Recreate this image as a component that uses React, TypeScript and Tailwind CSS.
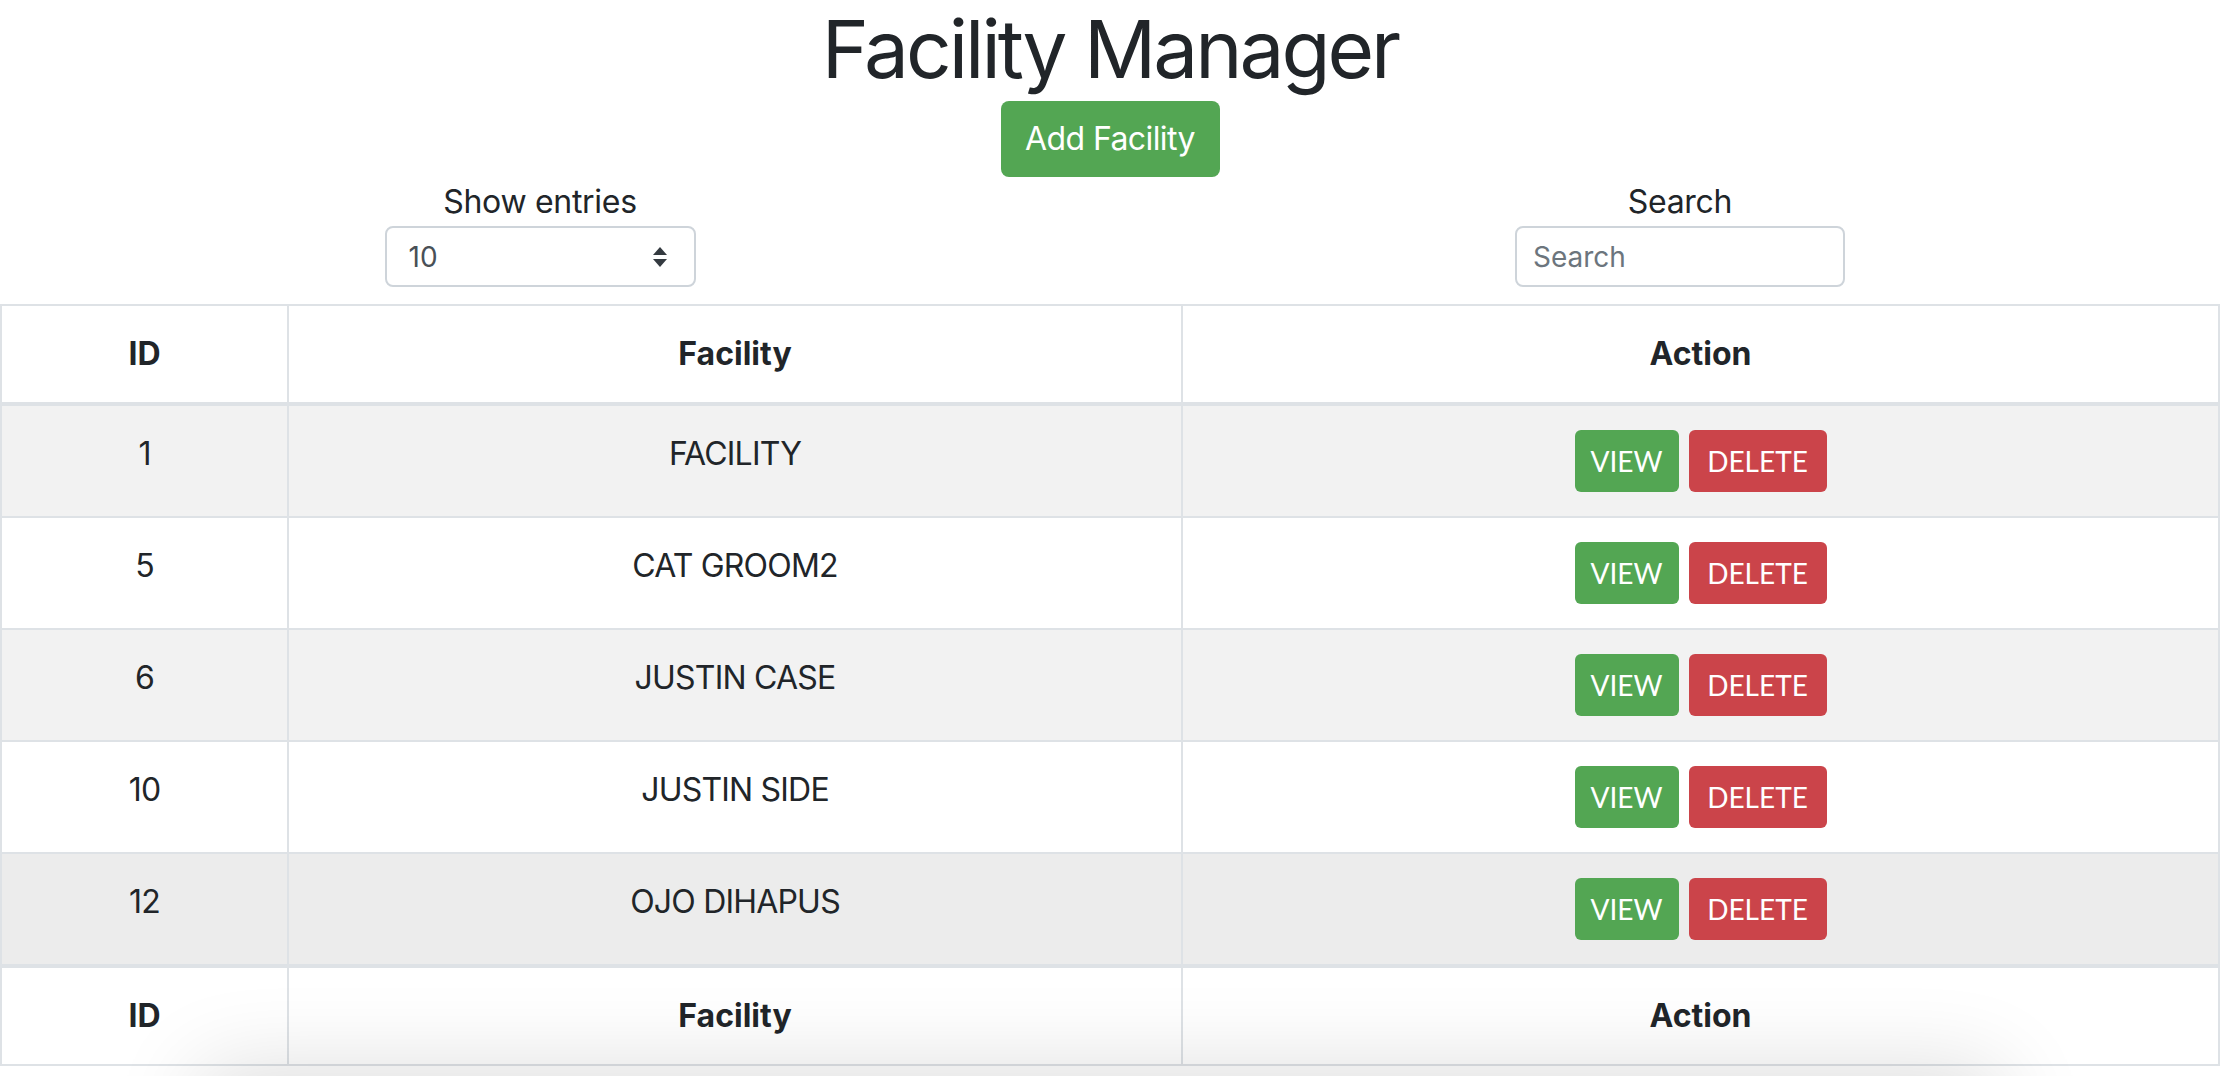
import React from 'react';

const rows = [
  { id: 1, name: 'FACILITY', bg: 'bg-[#f2f2f2]' },
  { id: 5, name: 'CAT GROOM2', bg: 'bg-white' },
  { id: 6, name: 'JUSTIN CASE', bg: 'bg-[#f2f2f2]' },
  { id: 10, name: 'JUSTIN SIDE', bg: 'bg-white' },
  { id: 12, name: 'OJO DIHAPUS', bg: 'bg-[#ececec]' },
];

const SortArrows = () => (
  <svg width="16" height="22" viewBox="0 0 16 22" className="text-[#343a40]">
    <path d="M8 1 L15 9 H1 Z" fill="currentColor" />
    <path d="M8 21 L15 13 H1 Z" fill="currentColor" />
  </svg>
);

const HeadRow = ({ top }: { top?: boolean }) => (
  <tr className="bg-white">
    <th className={`w-[287px] border-2 border-[#dee2e6] ${top ? 'border-b-4' : 'border-t-4'} px-6 py-6 text-[32px] leading-[48px] font-bold`}>ID</th>
    <th className={`w-[894px] border-2 border-[#dee2e6] ${top ? 'border-b-4' : 'border-t-4'} px-6 py-6 text-[32px] leading-[48px] font-bold`}>Facility</th>
    <th className={`border-2 border-[#dee2e6] ${top ? 'border-b-4' : 'border-t-4'} px-6 py-6 text-[32px] leading-[48px] font-bold`}>Action</th>
  </tr>
);

export default function App() {
  return (
    <div className="relative w-[2240px] h-[1076px] overflow-hidden bg-white text-[#212529] font-['Inter',sans-serif]">
      <div className="w-[2220px]">
        <h1 className="text-center text-[80px] leading-[97px] font-normal tracking-[-3px] h-[101px]">Facility Manager</h1>

        <div className="flex justify-center">
          <button className="w-[219px] h-[76px] rounded-[8px] bg-[#53a653] text-white text-[32px] leading-[48px] tracking-[-0.6px]">
            Add Facility
          </button>
        </div>

        <div className="grid grid-cols-2 mt-[1px]">
          <div className="flex flex-col items-center pr-[30px]">
            <label className="text-[32px] leading-[48px] tracking-[-0.3px]">Show entries</label>
            <div className="w-[311px] h-[61px] border-2 border-[#ced4da] rounded-[8px] flex items-center justify-between pl-[22px] pr-[26px]">
              <span className="text-[28px] text-[#495057]">10</span>
              <SortArrows />
            </div>
          </div>
          <div className="flex flex-col items-center pl-[30px]">
            <label className="text-[32px] leading-[48px] tracking-[-0.3px]">Search</label>
            <div className="w-[330px] h-[61px] border-2 border-[#ced4da] rounded-[8px] flex items-center px-[16px]">
              <span className="text-[28px] text-[#6c757d]">Search</span>
            </div>
          </div>
        </div>

        <table className="mt-[17px] w-[2220px] border-collapse border-2 border-[#dee2e6] text-center">
          <thead>
            <HeadRow top />
          </thead>
          <tbody>
            {rows.map((r) => (
              <tr key={r.id} className={r.bg}>
                <td className="border-2 border-[#dee2e6] px-6 py-6 align-top text-[32px] leading-[48px] tracking-[-0.8px]">{r.id}</td>
                <td className="border-2 border-[#dee2e6] px-6 py-6 align-top text-[32px] leading-[48px] tracking-[-0.8px]">{r.name}</td>
                <td className="border-2 border-[#dee2e6] px-6 py-6 align-top">
                  <div className="flex justify-center gap-[10px] font-['Lato',sans-serif]">
                    <button className="w-[104px] h-[62px] rounded-[6px] bg-[#53a653] text-white text-[28px]">VIEW</button>
                    <button className="w-[138px] h-[62px] rounded-[6px] bg-[#cb444a] text-white text-[28px]">DELETE</button>
                  </div>
                </td>
              </tr>
            ))}
          </tbody>
          <tfoot>
            <HeadRow />
          </tfoot>
        </table>
      </div>

      {/* shadow from an element just below the fold */}
      <div className="absolute left-[230px] w-[1740px] top-[1100px] h-[80px] bg-white shadow-[0_0_90px_30px_rgba(0,0,0,0.14)]" />
    </div>
  );
}
